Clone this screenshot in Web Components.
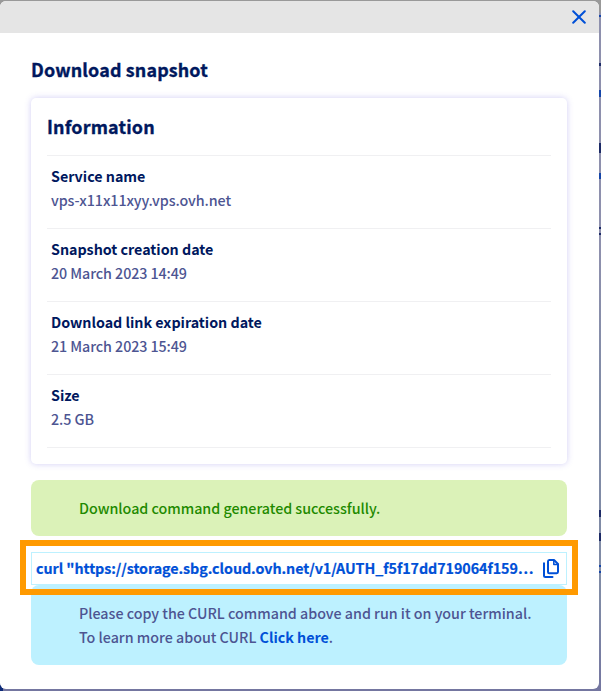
<!DOCTYPE html>
<html lang="en">
<head>
<meta charset="utf-8">
<title>Download snapshot</title>
<style>
html, body { margin: 0; height: 100%; overflow: hidden; }
body { font-family: "Noto Sans CJK SC", "Noto Sans", sans-serif; font-size: 14.3px; line-height: 24px; color: #4d5592; }
</style>
</head>
<body>
<snapshot-page></snapshot-page>
<script>
function define(name, html) {
  customElements.define(name, class extends HTMLElement {
    constructor() {
      super();
      this.attachShadow({ mode: 'open' }).innerHTML = html;
    }
  });
}

define('info-row', `
<style>
:host { display: block; box-sizing: border-box; height: 73px; padding: 8px 4px 0; border-top: 1px solid #f0f0f2; }
dl, dd { margin: 0; }
dt { font-weight: 700; color: #00185e; letter-spacing: -.02px; }
dd { font-weight: 500; letter-spacing: -.08px; }
dt, dd { white-space: nowrap; }
</style>
<dl><dt><slot name="label"></slot></dt><dd><slot></slot></dd></dl>`);

define('info-card', `
<style>
:host { display: block; box-sizing: border-box; height: 366px; padding: 0 16px; border-radius: 5px; background: #fff; box-shadow: 0 0 6px rgba(90,80,220,.28); }
h2 { margin: 0; height: 57px; line-height: 56px; font-size: 17.9px; font-weight: 700; color: #00185e; letter-spacing: .17px; -webkit-text-stroke: .35px #00185e; }
.end { height: 1px; background: #f0f0f2; }
</style>
<h2><slot name="title"></slot></h2><slot></slot><div class="end"></div>`);

define('notice-box', `
<style>
:host { display: block; box-sizing: border-box; padding: 16px 16px 16px 48px; border-radius: 8px; white-space: nowrap; font-weight: 500; letter-spacing: -.02px; }
:host([kind=success]) { background: #dbf2b8; color: #1f8a00; letter-spacing: -.03px; }
:host([kind=info]) { background: #bdf1ff; }
</style><slot></slot>`);

define('copy-field', `
<style>
:host { display: flex; box-sizing: border-box; height: 33px; padding: 0 6px 0 4px; align-items: center; justify-content: space-between; border: 1px solid #bdf1ff; color: #0050d7; font-weight: 700; position: relative; background: #fff; white-space: nowrap; }
.text { padding-bottom: 2px; letter-spacing: -.065px; -webkit-text-stroke: .2px #0050d7; }
.mark { position: absolute; inset: -13px -12px -11px -12px; border: 6px solid #ff9a00; }
svg { display: block; }
</style>
<div class="text"><slot></slot></div>
<svg width="18" height="20" viewBox="0 0 18 20" fill="none" stroke="#0050d7" stroke-width="2" stroke-linecap="round" stroke-linejoin="round"><path d="M2 4.2V16.5Q2 18 3.5 18H10.5M6 2.5Q6 1 7.2 1H12L16 5V12.8Q16 14.2 14.8 14.2H7.2Q6 14.2 6 13Z"/><path d="M11.8 1.5V5.5H16" stroke-width="1.5"/></svg>
<div class="mark"></div>`);

define('snapshot-dialog', `
<style>
:host { display: block; box-sizing: border-box; width: 599px; height: 688px; border-radius: 6px; background: #fff; overflow: hidden; }
header { display: flex; box-sizing: border-box; height: 32px; padding-right: 13px; align-items: center; justify-content: flex-end; background: #e5e5e5; }
main { padding: 0 32px 0 31px; }
h1 { margin: 0; height: 65px; line-height: 72px; font-size: 17.9px; font-weight: 700; color: #00185e; letter-spacing: .15px; -webkit-text-stroke: .35px #00185e; }
.messages { padding-top: 16px; display: flex; flex-direction: column; }
</style>
<header><svg width="14" height="14" viewBox="0 0 14 14" fill="none" stroke="#0050d7" stroke-width="2" stroke-linecap="round"><path d="M1.2 1.2L12.8 12.8M12.8 1.2L1.2 12.8"/></svg></header>
<main><h1><slot name="title"></slot></h1><slot></slot><div class="messages"><slot name="messages"></slot></div></main>`);

define('snapshot-page', `
<style>
:host {
  --n: #1c2a66; --b: #1545a8; --g: transparent;
  display: block; box-sizing: border-box; height: 691px; padding-top: 1px;
  background:
    linear-gradient(var(--g) 15px, var(--b) 0 17px, var(--g) 0 63px, var(--n) 0 66px, var(--g) 0 90px, var(--b) 0 97px, var(--g) 0 143px, var(--n) 0 153px, var(--g) 0 173px, var(--b) 0 179px, var(--g) 0 227px, var(--n) 0 229px, var(--g) 0 233px, var(--n) 0 235px, var(--g) 0 510px, var(--n) 0 517px, var(--g) 0 533px, var(--n) 0 541px, var(--g) 0 565px, var(--b) 0 567px, var(--g) 0 571px, var(--b) 0 573px, var(--g) 0) 100% 0 / 2px 100% no-repeat,
    linear-gradient(#0d2a78, #0d2a78) 0 100% / 3px 6px no-repeat,
    linear-gradient(#999 0 12px, #8e90ad 13px 250px, #808ba6 400px 600px, #7476a0 688px);
}
a { color: #0050d7; font-weight: 700; }
copy-field { margin-top: 16px; z-index: 1; }
</style>
<snapshot-dialog>
<span slot="title">Download snapshot</span>
<info-card>
<span slot="title">Information</span>
<info-row><span slot="label">Service name</span><span>vps-x11x11xyy.vps.ovh.net</span></info-row>
<info-row><span slot="label">Snapshot creation date</span><span>20 March 2023 14:49</span></info-row>
<info-row><span slot="label">Download link expiration date</span><span>21 March 2023 15:49</span></info-row>
<info-row><span slot="label">Size</span><span>2.5 GB</span></info-row>
</info-card>
<notice-box slot="messages" kind="success">Download command generated successfully.</notice-box>
<copy-field slot="messages"><span>curl "https://storage.sbg.cloud.ovh.net/v1/AUTH_f5f17dd719064f159…</span></copy-field>
<notice-box slot="messages" kind="info">Please copy the CURL command above and run it on your terminal.<br>To learn more about CURL <a>Click here</a>.</notice-box>
</snapshot-dialog>`);
</script>
</body>
</html>
